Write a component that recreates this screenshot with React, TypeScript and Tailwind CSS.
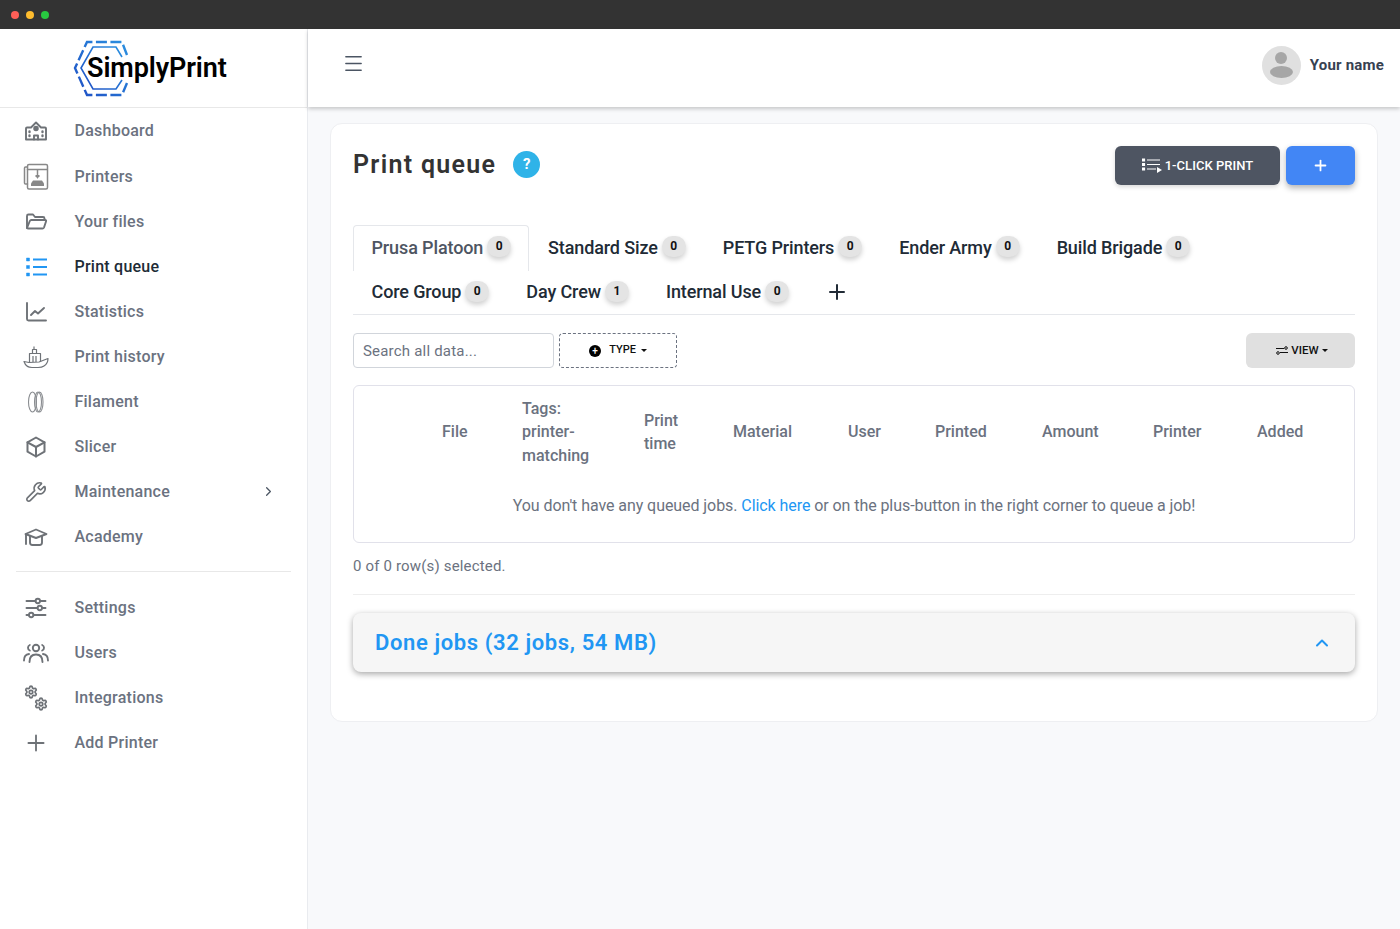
import * as React from "react"
import { ChevronRight, ChevronUp, Menu, Plus, Settings, Wrench } from "lucide-react"

const stroke = {
  fill: "none",
  stroke: "currentColor",
  strokeWidth: 1.9,
  strokeLinecap: "round" as const,
  strokeLinejoin: "round" as const,
}

function Logo() {
  return (
    <svg width="60" height="58" viewBox="0 0 60 58" className="shrink-0">
      <defs>
        <linearGradient id="logoBlue" x1="1" y1="0" x2="0" y2="1">
          <stop offset="0" stopColor="#2b90e0" />
          <stop offset="1" stopColor="#1f4fc4" />
        </linearGradient>
      </defs>
      <path d="M54 16L49 3H14L2 29 14 56H49L54 44" fill="none" stroke="url(#logoBlue)" strokeWidth="2.400" strokeDasharray="11 3.500" />
      <path d="M49 18L43 8H20L8 29 20 50H43L49 41" fill="none" stroke="url(#logoBlue)" strokeWidth="1.600" />
    </svg>
  )
}

function SchoolIcon() {
  return (
    <svg width="24" height="24" viewBox="0 0 24 24" {...stroke}>
      <path d="M2 20.500V9.500q0-1 1-1h4L12 3.500l5 5h4q1 0 1 1v11Z" />
      <circle cx="12" cy="9.500" r="1.800" fill="currentColor" />
      <path d="M10 20.500v-4h4v4" />
      <path d="M5.500 12.500v.5M5.500 16.500v.5M18.500 12.500v.5M18.500 16.500v.5" strokeWidth="2.400" />
    </svg>
  )
}

function PrinterIcon() {
  return (
    <svg width="26" height="28" viewBox="0 0 26 28" {...stroke} strokeWidth="1.500" className="text-[#888]">
      <rect x="4.500" y="1.500" width="20" height="24.500" rx="1.500" />
      <path d="M4.500 4H2.500Q1.500 4 1.500 5V20q0 1 1 1h2" />
      <path d="M4.500 6.500H24" />
      <path d="M14.500 7v8" strokeWidth="1.500" strokeLinecap="butt" />
      <path d="M12.500 12h4v2h-1l-1 2-1-2h-1Z" fill="currentColor" stroke="none" />
      <path d="M8 23v-2.500l2-3h9l2 3V23Z" fill="currentColor" stroke="none" />
    </svg>
  )
}

function FolderIcon() {
  return (
    <svg width="24" height="24" viewBox="0 0 24 24" {...stroke}>
      <path d="M3 18V6q0-1.500 1.500-1.500h4.500l2 2.500h8q1.500 0 1.500 1.500V10" />
      <path d="M3 18l2.800-7q.4-1 1.500-1H21q1.500 0 1 1.500l-2 6q-.4 1-1.500 1H4Q3 18.500 3 18Z" />
    </svg>
  )
}

function ListIcon() {
  return (
    <svg width="24" height="24" viewBox="0 0 24 24" fill="none" stroke="currentColor" strokeWidth="2">
      <path d="M9 4.500h14M9 12h14M9 19.500h14" />
      <path d="M2.500 3h3v3h-3ZM2.500 10.500h3v3h-3ZM2.500 18h3v3h-3Z" fill="currentColor" strokeWidth="0.500" />
    </svg>
  )
}

function ChartIcon() {
  return (
    <svg width="24" height="24" viewBox="0 0 24 24" {...stroke}>
      <path d="M3 3v16q0 1.500 1.500 1.500H22" />
      <path d="M7 15l4-4 3 2.500L20 8" />
    </svg>
  )
}

function ShipIcon() {
  return (
    <svg width="26" height="26" viewBox="0 0 26 26" fill="none" stroke="currentColor" strokeWidth="1.200" strokeLinejoin="round">
      <path d="M1 17.500l5 1 10-.5 9-3.500q0 5-4 7.500-2 1.500-6 1.500H9Q3 23.500 1 17.500Z" />
      <path d="M6.500 18.500V9.500h11V18M9.500 9.500V5.500h4v4M10 12v6M13 12v6" />
      <path d="M11 5.500V2.500" />
    </svg>
  )
}

function FilamentIcon() {
  return (
    <svg width="24" height="26" viewBox="0 0 24 26" fill="none" stroke="currentColor" strokeWidth="1.100" className="text-[#8a8d91]">
      <ellipse cx="8.500" cy="13" rx="4" ry="10" />
      <ellipse cx="14" cy="13" rx="3.500" ry="10" />
      <ellipse cx="15.500" cy="13" rx="3.500" ry="10" />
    </svg>
  )
}

function BoxIcon() {
  return (
    <svg width="24" height="24" viewBox="0 0 24 24" {...stroke} strokeWidth="2">
      <path d="M12 2.500l8.500 4.800v9.400L12 21.500l-8.500-4.800V7.300Z" />
      <path d="M3.500 7.300L12 12l8.500-4.700M12 12v9.500" />
    </svg>
  )
}

function CapIcon() {
  return (
    <svg width="24" height="24" viewBox="0 0 24 24" {...stroke}>
      <path d="M1.500 9L12 4.500 22.500 9 12 13Z" />
      <path d="M6 11v6.500q0 2.500 2.500 2.500h7q2.500 0 2.500-2.500V11" />
      <path d="M2 9.500V19" />
    </svg>
  )
}

function SlidersIcon() {
  return (
    <svg width="24" height="24" viewBox="0 0 24 24" {...stroke}>
      <path d="M2.500 5h9M16 5h5.500M2.500 12h11M18 12h3.500M2.500 19h2.500M9.500 19h12" />
      <circle cx="13.800" cy="5" r="2.200" />
      <circle cx="15.800" cy="12" r="2.200" />
      <circle cx="7.200" cy="19" r="2.200" />
    </svg>
  )
}

function UsersIcon() {
  return (
    <svg width="26" height="24" viewBox="0 0 26 24" {...stroke}>
      <circle cx="13" cy="7" r="3.200" />
      <path d="M6.500 21q0-7.500 6.500-7.500T19.500 21" />
      <path d="M6.800 9.500a3 3 0 0 1 0-5.500M19.200 9.500a3 3 0 0 0 0-5.500M1 19.500q0-6 5-6.500M25 19.500q0-6-5-6.500" />
    </svg>
  )
}

function GearsIcon() {
  return (
    <span className="relative block h-[26px] w-[24px]">
      <Settings size={14} strokeWidth={3} className="absolute left-0 top-0" />
      <Settings size={14} strokeWidth={3} className="absolute bottom-0 right-0" />
    </span>
  )
}

const navItems = [
  { name: "Dashboard", icon: <SchoolIcon /> },
  { name: "Printers", icon: <PrinterIcon />, extraTop: true },
  { name: "Your files", icon: <FolderIcon /> },
  { name: "Print queue", icon: <ListIcon />, active: true },
  { name: "Statistics", icon: <ChartIcon /> },
  { name: "Print history", icon: <ShipIcon /> },
  { name: "Filament", icon: <FilamentIcon /> },
  { name: "Slicer", icon: <BoxIcon /> },
  { name: "Maintenance", icon: <Wrench size={22} strokeWidth={1.800} />, arrow: true },
  { name: "Academy", icon: <CapIcon /> },
]

const bottomItems = [
  { name: "Settings", icon: <SlidersIcon /> },
  { name: "Users", icon: <UsersIcon /> },
  { name: "Integrations", icon: <GearsIcon /> },
  { name: "Add Printer", icon: <Plus size={26} strokeWidth={1.700} /> },
]

type NavItem = { name: string; icon: React.ReactNode; active?: boolean; arrow?: boolean; extraTop?: boolean }

function NavRow({ item }: { item: NavItem }) {
  return (
    <div className={`flex h-[45px] items-center text-base font-medium tracking-[0.24px] ${item.extraTop ? "mt-px" : ""} ${item.active ? "text-[#212b36]" : "text-[#6b7280]"}`}>
      <span className={`flex w-[74.500px] shrink-0 justify-center pr-[2.500px] ${item.active ? "text-[#2196f3]" : "text-[#6e7277]"}`}>
        {item.icon}
      </span>
      <span className="flex-1">{item.name}</span>
      {item.arrow && <ChevronRight size={15} strokeWidth={2} className="mr-[31px] text-[#4b5563]" />}
    </div>
  )
}

function Badge({ n }: { n: number }) {
  return (
    <span className="ml-[4px] flex h-[21px] w-[24px] shrink-0 -translate-y-px items-center justify-center rounded-full bg-[#e4e4e4] text-[12px] font-bold tracking-normal text-[#111] shadow-[0_3px_5px_rgba(0,0,0,0.18)]">
      {n}
    </span>
  )
}

function Tab({ label, n, className }: { label: string; n: number; className: string }) {
  return (
    <div className={`flex items-center text-lg font-medium tracking-[-0.12px] ${className}`}>
      <span>{label}</span>
      <Badge n={n} />
    </div>
  )
}

const Caret = ({ className }: { className: string }) => (
  <span className={`inline-block border-x-[3px] border-t-[3px] border-x-transparent border-t-current ${className}`} />
)

const columns = ["File", "Tags: printer-matching", "Print time", "Material", "User", "Printed", "Amount", "Printer", "Added"]

export default function App() {
  return (
    <div className="flex h-[929px] flex-col overflow-hidden bg-[#f8f9fb] font-['Roboto',sans-serif]">
      {/* window bar */}
      <div className="flex h-[29px] shrink-0 items-center gap-[7px] bg-[#333333] pl-[11px]">
        <span className="h-2 w-2 rounded-full bg-[#ff5f57]" />
        <span className="h-2 w-2 rounded-full bg-[#febc2e]" />
        <span className="h-2 w-2 rounded-full bg-[#28c840]" />
      </div>

      <div className="flex min-h-0 flex-1">
        {/* Sidebar */}
        <aside className="w-[308px] shrink-0 border-r border-[#e9ebef] bg-white">
          <div className="flex h-[79px] items-center border-b border-[#e8e8e8] pl-[73px]">
            <Logo />
            <span className="relative ml-[-46px] pt-[1px] text-[27px] font-semibold tracking-[-0.1px] text-black">SimplyPrint</span>
          </div>
          <nav>
            {navItems.map((item) => (
              <NavRow key={item.name} item={item} />
            ))}
          </nav>
          <div className="mx-4 mb-[13px] mt-[12px] border-t border-[#e8e8e8]" />
          <nav>
            {bottomItems.map((item) => (
              <NavRow key={item.name} item={item} />
            ))}
          </nav>
        </aside>

        <div className="flex min-w-0 flex-1 flex-col">
          {/* Header */}
          <header className="flex h-[78px] shrink-0 items-center justify-between bg-white pb-[6px] pl-[34px] pr-4 shadow-[0_2px_4px_rgba(0,0,0,0.2)]">
            <Menu size={23} strokeWidth={1.500} className="mb-[3px] text-[#4b5563]" />
            <div className="flex items-center gap-[9px]">
              <div className="flex h-[39px] w-[39px] flex-col items-center overflow-hidden rounded-full bg-[#e0e0e0] pt-[6px]">
                <span className="h-[12px] w-[12px] rounded-full bg-[#a6a6a6]" />
                <span className="mt-[2px] h-[12px] w-[23px] rounded-[50%] bg-[#a6a6a6]" />
              </div>
              <span className="text-[15px] font-bold tracking-[0.2px] text-[#374151]">Your name</span>
            </div>
          </header>

          <main className="flex-1 pl-[22px] pr-[22px] pt-4">
            <div className="h-[599px] rounded-xl border border-[#eeeff2] bg-white px-[22px] pt-[21px]">
              <div className="flex h-[40px] items-center justify-between">
                <div className="flex items-center">
                  <h1 className="text-[25px] font-semibold tracking-[1.300px] text-[#333333]">Print queue</h1>
                  <span className="ml-[17px] flex h-[27px] w-[27px] -translate-y-px items-center justify-center rounded-full bg-[#2fb3e8] text-[15px] font-bold text-white">?</span>
                </div>
                <div className="flex gap-[6px]">
                  <button className="flex h-[39px] w-[165px] items-center justify-center rounded-md bg-[#4e5562] pt-px text-[13px] font-medium tracking-[0.05px] text-white shadow-[0_2px_4px_rgba(0,0,0,0.15)]">
                    <svg width="20" height="15" viewBox="0 0 20 15" fill="none" stroke="currentColor" strokeWidth="1.200" className="mr-[3px]">
                      <path d="M5 2h13M5 6.500h13M5 11h9" />
                      <path d="M0.500 1h2v2h-2ZM0.500 5.500h2v2h-2ZM0.500 10h2v2h-2Z" fill="currentColor" />
                      <path d="M15 9l5 3-5 3Z" fill="currentColor" stroke="none" />
                    </svg>
                    1-CLICK PRINT
                  </button>
                  <button className="flex h-[39px] w-[69px] items-center justify-center rounded-md bg-[#4286f5] text-white shadow-[0_3px_6px_rgba(0,0,0,0.3)]">
                    <Plus size={17} strokeWidth={2.500} />
                  </button>
                </div>
              </div>

              {/* Tabs */}
              <div className="mt-[40px] border-b border-[#e5e7eb] text-[#212b36]">
                <div className="flex h-[46px] items-center">
                  <Tab label="Prusa Platoon" n={0} className="h-[46px] w-[176px] rounded-t border border-b-0 border-[#e5e7eb] pb-[2px] pl-[17.500px] text-[#4e5562]" />
                  <Tab label="Standard Size" n={0} className="ml-[19px] h-[46px] pb-[1px]" />
                  <Tab label="PETG Printers" n={0} className="ml-[37px] h-[46px] pb-[1px]" />
                  <Tab label="Ender Army" n={0} className="ml-[37px] h-[46px] pb-[1px]" />
                  <Tab label="Build Brigade" n={0} className="ml-[37px] h-[46px] pb-[1px]" />
                </div>
                <div className="flex h-[43px] items-center pb-[1px]">
                  <Tab label="Core Group" n={0} className="ml-[18.500px]" />
                  <Tab label="Day Crew" n={1} className="ml-[37px]" />
                  <Tab label="Internal Use" n={0} className="ml-[37px]" />
                  <Plus size={24} strokeWidth={2} className="ml-[36px]" />
                </div>
              </div>

              {/* Toolbar */}
              <div className="mt-[18px] flex h-[35px] items-stretch">
                <input
                  placeholder="Search all data..."
                  className="w-[201px] rounded border border-[#d1d5db] px-[9px] pt-px text-[15px] tracking-[0.2px] text-[#374151] placeholder:text-[#6b7280]"
                />
                <button className="ml-[5px] flex w-[118px] items-center justify-center rounded border border-dashed border-[#6b7280] text-[11px] font-medium text-[#111]">
                  <span className="mr-2 flex h-3 w-3 items-center justify-center rounded-full bg-black text-[10px] leading-none text-white">+</span>
                  TYPE
                  <Caret className="ml-[5px]" />
                </button>
                <button className="ml-auto flex w-[109px] items-center justify-center rounded-md bg-[#e0e0e0] pl-[3px] text-[11.500px] font-medium text-[#111]">
                  <svg width="12" height="9" viewBox="0 0 12 9" fill="none" stroke="currentColor" strokeWidth="1" className="mr-[3px]">
                    <path d="M0 2.500h8M4 6.500h8" />
                    <circle cx="10" cy="2" r="1.300" />
                    <circle cx="2" cy="7" r="1.300" />
                  </svg>
                  VIEW
                  <Caret className="ml-[3px]" />
                </button>
              </div>

              {/* Table */}
              <div className="mt-[17px] h-[158px] rounded-md border border-[#e1e1ea]">
                <div className="grid h-[92px] grid-cols-[80px_122px_89px_115px_87px_107px_111px_104px_1fr] items-center pl-[88px] text-base font-medium leading-[23.500px] text-[#6b7280]">
                  {columns.map((c) => (
                    <div key={c} className={c.startsWith("Tags") ? "w-[80px]" : c === "Print time" ? "w-[50px]" : ""}>
                      {c}
                    </div>
                  ))}
                </div>
                <p className="mt-[16px] text-center text-base tracking-[-0.07px] text-[#6b7280]">
                  You don't have any queued jobs. <span className="text-[#2196f3]">Click here</span> or on the plus-button in the right corner to queue a job!
                </p>
              </div>

              <p className="mt-[14px] text-[15px] leading-[18px] tracking-[0.17px] text-[#6b7280]">0 of 0 row(s) selected.</p>
              <div className="mt-[19px] border-t border-[#eeeeee]" />

              {/* Done jobs */}
              <div className="mt-[18px] flex h-[59px] items-center justify-between rounded-lg bg-[#f6f6f6] pl-[22px] pr-[23px] shadow-[0_2px_6px_rgba(0,0,0,0.35)]">
                <span className="text-[22px] font-semibold tracking-[0.62px] text-[#2196f3]">Done jobs (32 jobs, 54 MB)</span>
                <ChevronUp size={20} strokeWidth={2.400} className="text-[#2196f3]" />
              </div>
            </div>
          </main>
        </div>
      </div>
    </div>
  )
}
